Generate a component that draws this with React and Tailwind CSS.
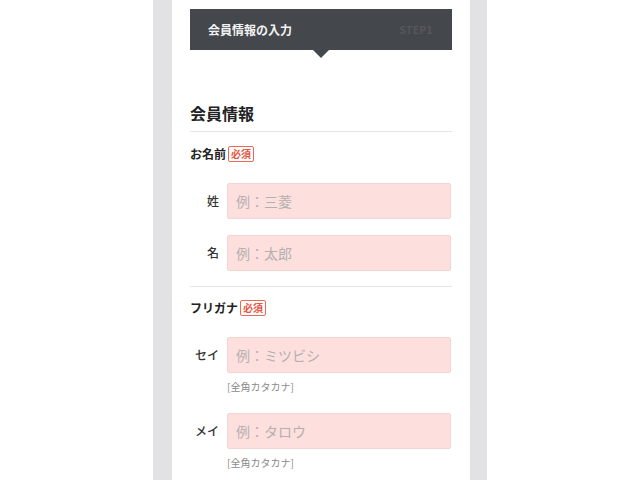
import React from "react";

const font = { fontFamily: '"Noto Sans CJK JP", "Noto Sans", sans-serif' };

function Badge() {
  return (
    <span className="ml-[2px] inline-flex h-[16px] items-center rounded-[2px] border border-[#ea6a55] px-[2px] text-[10px] leading-none text-[#e5563f]">
      必須
    </span>
  );
}

function Field({ label, placeholder, note, className = "" }) {
  return (
    <div className={className}>
      <div className="flex items-center">
        <div className="w-[29px] shrink-0 text-right text-[12px] font-medium text-[#333]">{label}</div>
        <div className="ml-[8px] flex h-[36px] w-[224px] items-center rounded-[2px] border border-[#f3d5d4] bg-[#fddfde] pl-[8px] text-[14px] text-[#b5b0b0]">
          {placeholder}
        </div>
      </div>
      {note && (
        <div className="ml-[37px] mt-[6px] text-[10px] leading-[16px] text-[#8a8a8a]">{note}</div>
      )}
    </div>
  );
}

export default function App() {
  return (
    <div className="min-h-[480px] w-full bg-white" style={font}>
      <div className="mx-auto min-h-[480px] w-[334px] border-l-[19px] border-r-[17px] border-[#e2e2e4] bg-white px-[18px] pt-[9px]">
        <div className="relative flex h-[41px] items-center justify-between bg-[#44474c] pl-[18px] pr-[19px]">
          <span className="text-[12px] font-bold text-[#f2f2f2]">会員情報の入力</span>
          <span className="text-[10px] font-bold tracking-[0.5px] text-[#55585d]">STEP1</span>
          <div className="absolute left-1/2 top-full h-0 w-0 -translate-x-1/2 border-l-[8px] border-r-[8px] border-t-[8px] border-l-transparent border-r-transparent border-t-[#44474c]" />
        </div>

        <div className="mt-[51px] border-b border-[#e6e6e6] pb-[6px] text-[16px] font-bold leading-[24px] text-[#222]">
          会員情報
        </div>

        <div className="mt-[13px] flex items-center text-[12px] font-bold text-[#222]">
          お名前<Badge />
        </div>

        <Field className="mt-[20px]" label="姓" placeholder="例：三菱" />
        <Field className="mt-[16px]" label="名" placeholder="例：太郎" />

        <div className="mt-[15px] border-t border-[#e6e6e6] pt-[12px]">
          <div className="flex items-center text-[12px] font-bold text-[#222]">
            フリガナ<Badge />
          </div>
        </div>

        <Field className="mt-[20px]" label="セイ" placeholder="例：ミツビシ" note="[全角カタカナ]" />
        <Field className="mt-[18px]" label="メイ" placeholder="例：タロウ" note="[全角カタカナ]" />
      </div>
    </div>
  );
}
